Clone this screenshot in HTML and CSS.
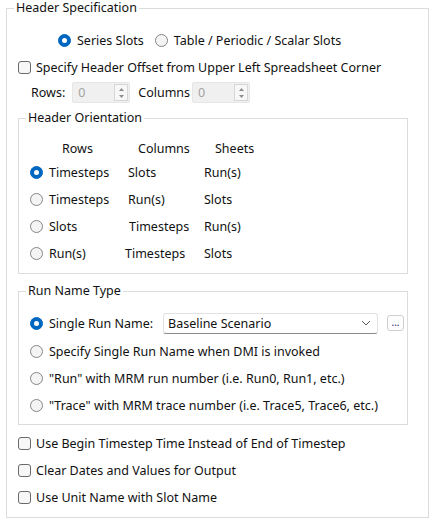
FILE: index.html
```html
<!DOCTYPE html>
<html lang="en">
<head>
    <meta charset="UTF-8">
    <title>Header Specification</title>
    <link rel="stylesheet" href="styles.css">
</head>
<body>
    <fieldset class="group outer">
        <legend>Header Specification</legend>
        <div class="group-body">
            <div class="row slot-type">
                <label class="opt"><span class="radio on"></span>Series Slots</label>
                <label class="opt"><span class="radio"></span>Table / Periodic / Scalar Slots</label>
            </div>

            <label class="opt check-row"><span class="check"></span>Specify Header Offset from Upper Left Spreadsheet Corner</label>

            <div class="row offset-row">
                <span class="lbl rows-lbl">Rows:</span>
                <div class="spin">
                    <span class="spin-val">0</span>
                    <span class="spin-btn">
                        <svg width="9" height="7" viewBox="0 0 9 7"><path d="M2 5 L4.5 2 L7 5 Z" fill="#8c8c8c"/></svg>
                        <svg width="9" height="7" viewBox="0 0 9 7"><path d="M2 2 L4.5 5 L7 2 Z" fill="#8c8c8c"/></svg>
                    </span>
                </div>
                <span class="lbl cols-lbl">Columns</span>
                <div class="spin">
                    <span class="spin-val">0</span>
                    <span class="spin-btn">
                        <svg width="9" height="7" viewBox="0 0 9 7"><path d="M2 5 L4.5 2 L7 5 Z" fill="#8c8c8c"/></svg>
                        <svg width="9" height="7" viewBox="0 0 9 7"><path d="M2 2 L4.5 5 L7 2 Z" fill="#8c8c8c"/></svg>
                    </span>
                </div>
            </div>

            <fieldset class="group inner orient">
                <legend>Header Orientation</legend>
                <div class="group-body orient-body">
                    <div class="orient-head">
                        <span class="h-rows">Rows</span>
                        <span class="h-cols">Columns</span>
                        <span class="h-sheets">Sheets</span>
                    </div>
                    <div class="orient-row">
                        <label class="opt"><span class="radio on"></span>Timesteps</label>
                        <span>Slots</span>
                        <span>Run(s)</span>
                    </div>
                    <div class="orient-row">
                        <label class="opt"><span class="radio"></span>Timesteps</label>
                        <span>Run(s)</span>
                        <span>Slots</span>
                    </div>
                    <div class="orient-row">
                        <label class="opt"><span class="radio"></span>Slots</label>
                        <span class="nudge-r">Timesteps</span>
                        <span>Run(s)</span>
                    </div>
                    <div class="orient-row">
                        <label class="opt"><span class="radio"></span>Run(s)</label>
                        <span class="nudge-l">Timesteps</span>
                        <span>Slots</span>
                    </div>
                </div>
            </fieldset>

            <fieldset class="group inner run-name">
                <legend>Run Name Type</legend>
                <div class="group-body run-body">
                    <div class="row single-run">
                        <label class="opt"><span class="radio on"></span>Single Run Name:</label>
                        <div class="combo">
                            <span>Baseline Scenario</span>
                            <svg width="10" height="6" viewBox="0 0 10 6"><path d="M1 1 L5 5 L9 1" fill="none" stroke="#5c5c5c" stroke-width="1"/></svg>
                        </div>
                        <button class="dots">...</button>
                    </div>
                    <label class="opt run-opt"><span class="radio"></span>Specify Single Run Name when DMI is invoked</label>
                    <label class="opt run-opt"><span class="radio"></span>"Run" with MRM run number (i.e. Run0, Run1, etc.)</label>
                    <label class="opt run-opt"><span class="radio"></span>"Trace" with MRM trace number (i.e. Trace5, Trace6, etc.)</label>
                </div>
            </fieldset>

            <div class="bottom-checks">
                <label class="opt check-row"><span class="check"></span>Use Begin Timestep Time Instead of End of Timestep</label>
                <label class="opt check-row"><span class="check"></span>Clear Dates and Values for Output</label>
                <label class="opt check-row"><span class="check"></span>Use Unit Name with Slot Name</label>
            </div>
        </div>
    </fieldset>
</body>
</html>
```

FILE: styles.css
```css
body {
    margin: 0;
    background-color: #fff;
    font-family: "Noto Sans", sans-serif;
    font-size: 12.5px;
    color: #111;
}
.group {
    margin: 0;
    padding: 0;
    border: 1px solid #dcdcdc;
    min-width: 0;
}
.group legend {
    margin-left: 7px;
    padding: 0 2px;
    height: 16px;
    line-height: 16px;
}
.outer {
    margin: 0 5px 3px 6px;
}
.outer > .group-body {
    padding: 0 10px 10px 11px;
}
.row {
    display: flex;
    align-items: center;
}
.opt {
    display: flex;
    align-items: center;
    height: 20px;
    white-space: nowrap;
}
.radio {
    flex: none;
    box-sizing: border-box;
    width: 13px;
    height: 13px;
    margin-right: 6px;
    border-radius: 50%;
    border: 1px solid #858585;
    background-color: #f4f4f4;
    display: flex;
    align-items: center;
    justify-content: center;
}
.radio.on {
    background-color: #0067c0;
    border-color: #0067c0;
}
.radio.on::after {
    content: "";
    width: 5px;
    height: 5px;
    border-radius: 50%;
    background-color: #fff;
}
.check {
    flex: none;
    box-sizing: border-box;
    width: 13px;
    height: 13px;
    margin-right: 5px;
    border-radius: 3px;
    border: 1px solid #6a6a6a;
    background-color: #f7f7f7;
}

/* series / table choice */
.slot-type {
    margin-top: 14px;
    padding-left: 40px;
    gap: 11px;
}
.check-row {
    margin-top: 7px;
}

/* offset spinners */
.offset-row {
    margin-top: 5px;
    padding-left: 13px;
}
.rows-lbl {
    margin-right: 7px;
}
.cols-lbl {
    margin: 0 2px 0 8px;
}
.spin {
    box-sizing: border-box;
    width: 58px;
    height: 21px;
    display: flex;
    align-items: center;
    justify-content: space-between;
    background-color: #f0f0f0;
    border: 1px solid #e6e6e6;
    border-radius: 2px;
}
.spin-val {
    padding-left: 5px;
    color: #a3a3a3;
}
.spin-btn {
    box-sizing: border-box;
    width: 14px;
    height: 17px;
    margin-right: 1px;
    display: flex;
    flex-direction: column;
    align-items: center;
    justify-content: center;
    border: 1px solid #d6d6d6;
    background-color: #f7f7f7;
}

/* inner groups */
.inner {
    margin-right: 10px;
}
.orient {
    margin-top: 7px;
}
.orient-body {
    padding: 12px 0 10px 11px;
    display: flex;
    flex-direction: column;
    gap: 7px;
}
.orient-head,
.orient-row {
    display: grid;
    grid-template-columns: 98px 76px auto;
    align-items: center;
    height: 20px;
}
.orient-head {
    margin-bottom: -3px;
}
.h-rows {
    padding-left: 32px;
}
.h-cols {
    padding-left: 10px;
}
.h-sheets {
    padding-left: 11px;
}
.nudge-r {
    margin-left: 1px;
}
.nudge-l {
    margin-left: -3px;
}

.run-name {
    margin-top: 9px;
}
.run-body {
    padding: 13px 0 9px 11px;
    display: flex;
    flex-direction: column;
    gap: 7px;
}
.single-run {
    height: 22px;
}
.single-run .opt {
    width: 133px;
}
.combo {
    box-sizing: border-box;
    width: 215px;
    height: 21px;
    padding: 0 6px 0 4px;
    display: flex;
    align-items: center;
    justify-content: space-between;
    border: 1px solid #e2e2e2;
    border-bottom-color: #8a8a8a;
    border-radius: 3px;
    background-color: #fff;
}
.dots {
    box-sizing: border-box;
    width: 17px;
    height: 16px;
    margin-left: 9px;
    padding: 0 0 3px;
    border: 1px solid #cfcfcf;
    border-radius: 3px;
    background-color: #fdfdfd;
    font-family: "Noto Sans", sans-serif;
    font-size: 10px;
    line-height: 10px;
    color: #1a1a6a;
}

.bottom-checks {
    margin-top: 8px;
}
.bottom-checks .check-row {
    margin-top: 0;
    margin-bottom: 7px;
}
.bottom-checks .check-row:last-child {
    margin-bottom: 0;
}
```
